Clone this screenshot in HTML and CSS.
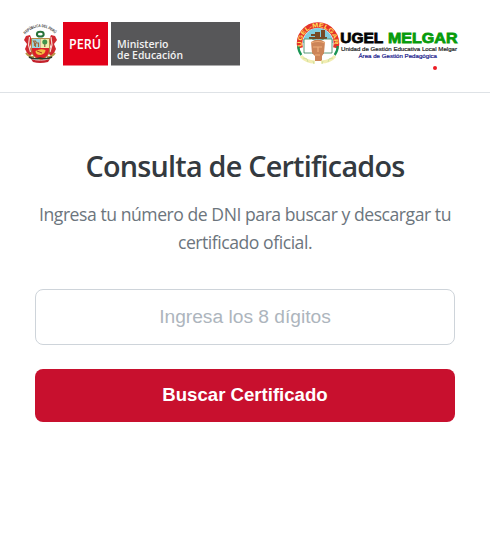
FILE: index.html
```html
<!DOCTYPE html>
<html lang="es">
<head>
<meta charset="utf-8">
<meta name="viewport" content="width=device-width, initial-scale=1">
<title>Consulta de Certificados</title>
<link rel="stylesheet" href="styles.css">
</head>
<body>
<header class="header">
  <svg class="logo" width="217" height="46" viewBox="23 21 217 46" role="img" aria-label="Ministerio de Educación">
    <defs><path id="crest-arc" d="M25 34.5Q40 19.5 56 34.5"/></defs>
    <text class="crest-text"><textPath href="#crest-arc" textLength="34" lengthAdjust="spacingAndGlyphs">REPÚBLICA DEL PERÚ</textPath></text>
    <path d="M26 36l4-1 2 5-2 7 3 6-4 4-4-8 2-5-3-4zM55 36l-4-1-2 5 2 7-3 6 4 4 4-8-2-5 3-4z" fill="#cf2930"/>
    <path d="M29.5 37l-1 8 2 7M51 37l1 8-2 7" fill="none" stroke="#f5d9cf" stroke-width="1.2"/>
    <ellipse cx="40.3" cy="34.2" rx="3.4" ry="2.4" fill="none" stroke="#27723a" stroke-width="2"/>
    <path d="M31.5 38.5h18V50q0 7-9 10-9-3-9-10z" fill="#dc2029" stroke="#a98c35" stroke-width=".8"/>
    <path d="M32 39h8.5v9H32z" fill="#9bd5df"/><path d="M40.5 39H49v9h-8.5z" fill="#f0edae"/>
    <path d="M34.5 46v-3l-1-2h2l1 2h2v4M35.5 43v4" fill="none" stroke="#9d6a3c" stroke-width="1.2"/>
    <path d="M44.8 47v-4" stroke="#6d4b29"/><circle cx="44.8" cy="42" r="2.5" fill="#43954b"/>
    <path d="M35.5 51q5-3 10-1 0 4-5 5-5 0-5-4z" fill="#f3bd42"/><path d="M37 51l5 2" stroke="#a53a21"/>
    <path d="M26 53q3 4 8 4M55 53q-3 4-8 4" fill="none" stroke="#b79846" stroke-width="2"/>
    <path d="M29 57q5 3 11 1 6 2 12-1" fill="none" stroke="#2f3a28" stroke-width="1.6"/>
    <path d="M31 59q9 3 19 0l-2 3q-8 2-15 0z" fill="#c3222c"/>
    <path d="M63 22h45v43.5H63z" fill="#e2001a"/><path d="M111 22h129v43.5H111z" fill="#575759"/>
    <text x="69" y="49.4" class="peru" textLength="32" lengthAdjust="spacingAndGlyphs">PERÚ</text>
    <text x="117" y="47.5" class="ministry" textLength="51.5" lengthAdjust="spacingAndGlyphs">Ministerio</text>
    <text x="117" y="58.5" class="ministry" textLength="66" lengthAdjust="spacingAndGlyphs">de Educación</text>
  </svg>
  <svg class="logo" width="163" height="50" viewBox="296 21 163 50" role="img" aria-label="UGEL Melgar">
    <defs><path id="seal-arc" d="M302 46.5A16.3 16.3 0 1 1 334 46.5"/></defs>
    <path d="M303 43a15 15 0 0 1 30 0z" fill="#80cedf"/>
    <path d="M300.2 48A18.4 18.4 0 1 1 335.8 48" fill="none" stroke="#e5322a" stroke-width="5.6"/>
    <path d="M298.3 46q0 5 3 9M337.7 46q0 5-3 9" fill="none" stroke="#199554" stroke-width="2.2"/>
    <path d="M309 37h18v2h-18zM311 34h4v2h-4zM315 32h5v5h-5zM321 30h4v7h-4z" fill="#764a25"/>
    <path d="M304 39q8-1 14 2 6-3 14-2v14q-8-1-14 2-6-3-14-2z" fill="#fff" stroke="#348059" stroke-width=".8"/>
    <path d="M311 42q7-5 14 0l-1 11-2 3v5h-7v-5l-3-3z" fill="#cc8458"/>
    <path d="M311 43q7-3 14 0M313 47h9M318 47v5M315 55h5" fill="none" stroke="#efad7b" stroke-width="1.2"/>
    <path d="M301 56q5 6 14 6M335 56q-5 6-14 6" fill="none" stroke="#f2edb2" stroke-width="3"/>
    <path d="M303 58l4 1 1 3M333 58l-4 1-1 3M313 61l1 3M323 61l-1 3" fill="none" stroke="#d0e0a0"/>
    <text class="seal-text"><textPath href="#seal-arc" textLength="55" lengthAdjust="spacingAndGlyphs">UGEL-MELGAR</textPath></text>
    <text x="340.3" y="43.3" class="ugel" textLength="43" lengthAdjust="spacingAndGlyphs">UGEL</text>
    <text x="388" y="43.3" class="ugel melgar" textLength="69.5" lengthAdjust="spacingAndGlyphs">MELGAR</text>
    <text x="341" y="51" class="unit" textLength="116" lengthAdjust="spacingAndGlyphs">Unidad de Gestión Educativa Local Melgar</text>
    <text x="358.5" y="58" class="unit area" textLength="78.5" lengthAdjust="spacingAndGlyphs">Área de Gestión Pedagógica</text>
    <circle cx="435" cy="68" r="2" fill="#ed1c24"/>
  </svg>
</header>
<main class="main">
  <h1 class="title">Consulta de Certificados</h1>
  <p class="intro">Ingresa tu número de DNI para buscar y descargar tu<br>certificado oficial.</p>
  <form class="form">
    <input class="dni" type="text" maxlength="8" placeholder="Ingresa los 8 dígitos" aria-label="DNI">
    <button class="submit" type="button">Buscar Certificado</button>
  </form>
</main>
</body>
</html>
```
FILE: styles.css
```css
* { box-sizing: border-box; }
body { margin: 0; background: #fff; color: #343a40; font-family: "Open Sans", "Noto Sans", sans-serif; }
.header { display: flex; justify-content: space-between; align-items: flex-start; height: 93px; padding: 21px 31px 0 23px; border-bottom: 1px solid #dee2e6; }
.logo { display: block; overflow: visible; }
.crest-text { font: bold 4px "Liberation Sans", sans-serif; fill: #333; }
.peru { font: 600 14.5px "Open Sans", sans-serif; fill: #fff; }
.ministry { font: 600 9.8px "Open Sans", sans-serif; fill: #f2f2f2; }
.seal-text { font: bold 6px "Liberation Sans", sans-serif; fill: #ffe45c; }
.ugel { font: bold 14.7px "Liberation Sans", sans-serif; fill: #050505; stroke: #050505; stroke-width: .8px; }
.ugel.melgar { fill: #079b0b; stroke: #079b0b; }
.unit { font: 6px "Liberation Sans", sans-serif; fill: #222; stroke: #222; stroke-width: .2px; }
.unit.area { fill: #17178b; stroke: #17178b; }
.main { padding: 51px 35px 0; text-align: center; }
.title { margin: 0; font-size: 28.8px; line-height: 43px; font-weight: 600; letter-spacing: -.78px; white-space: nowrap; }
.intro { margin: 13px -10px 33px; color: #6c757d; font-size: 17.6px; line-height: 28px; letter-spacing: -.46px; white-space: nowrap; }
.form { display: grid; gap: 24px; }
.dni { width: 100%; height: 56px; border: 1px solid #ced4da; border-radius: 8px; padding: 0 16px; background: #fff; font: 19.2px "Liberation Sans", sans-serif; text-align: center; }
.dni::placeholder { color: #adb5bd; opacity: 1; }
.submit { height: 53px; padding: 0 0 2px; border: 0; border-radius: 8px; background: #c8102e; color: #fff; font: bold 18.6px "Liberation Sans", sans-serif; }
```
